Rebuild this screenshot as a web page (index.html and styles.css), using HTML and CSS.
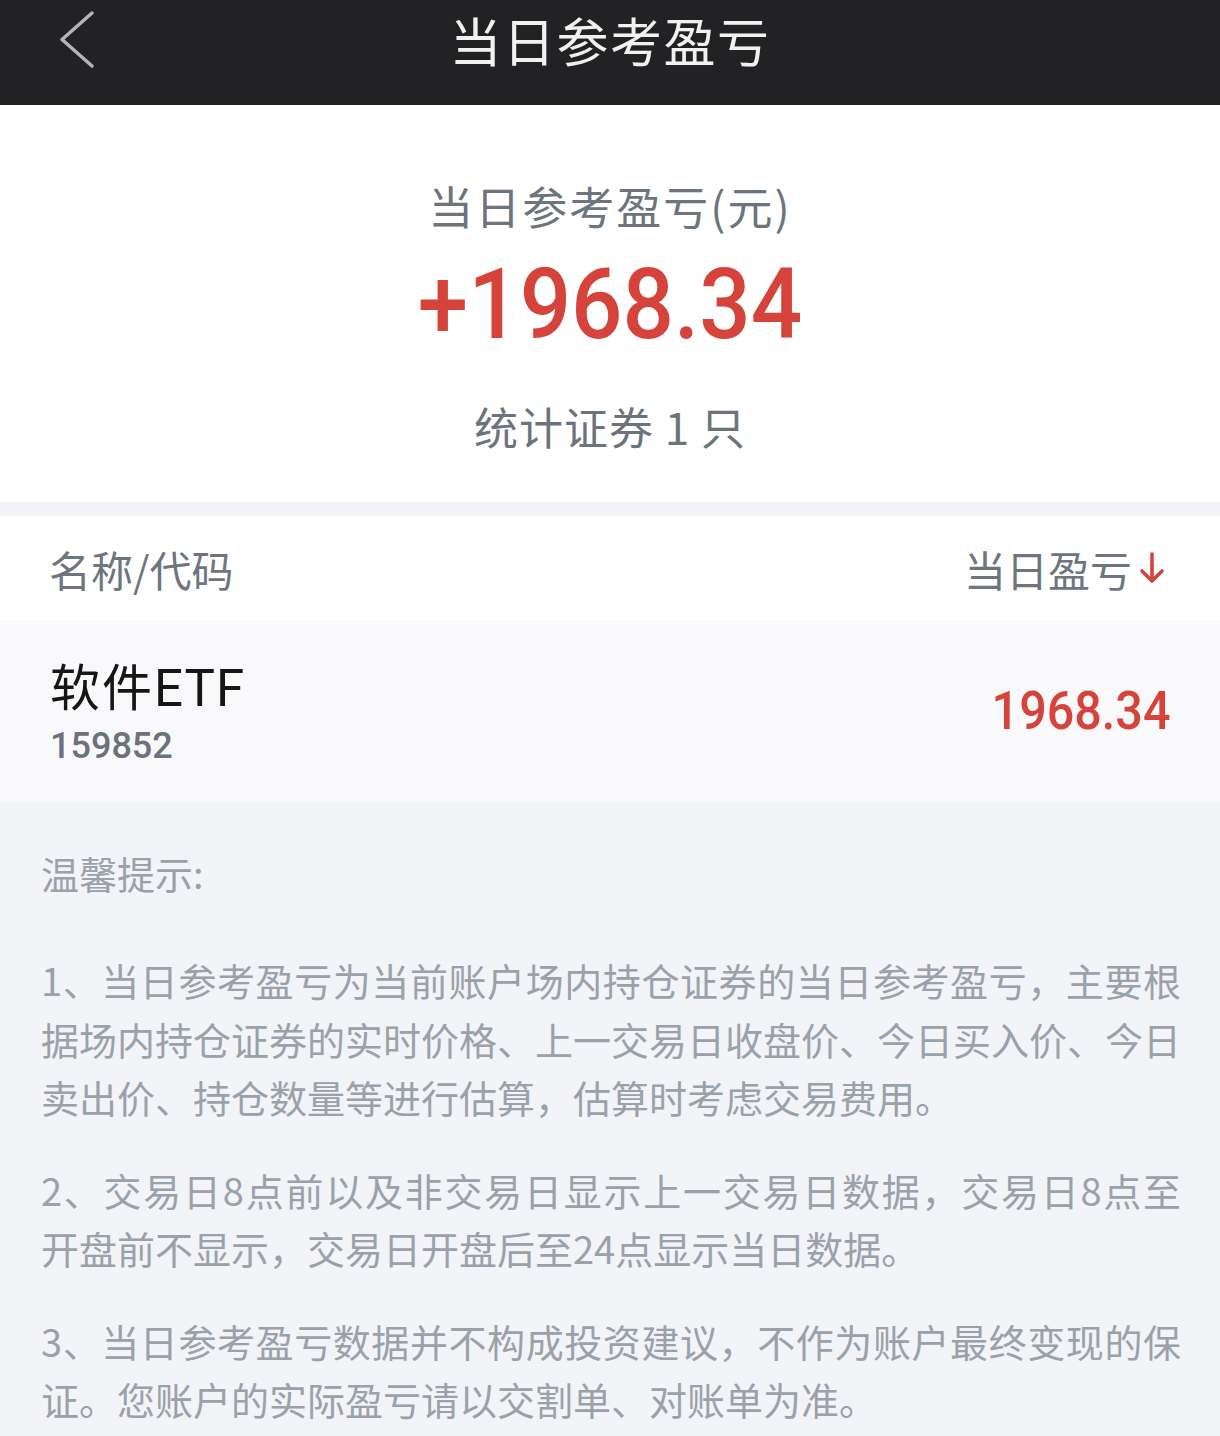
FILE: index.html
```html
<!DOCTYPE html>
<html lang="zh-CN">
<head>
<meta charset="utf-8">
<title>当日参考盈亏</title>
<link rel="stylesheet" href="styles.css">
</head>
<body>
<header class="topbar">
  <div class="back">
    <svg width="40" height="60" viewBox="0 0 40 60" aria-hidden="true">
      <path d="M33 3 L3 29.5 L33 56" fill="none" stroke="#b4b4b6" stroke-width="3.5" stroke-linecap="round" stroke-linejoin="round"/>
    </svg>
  </div>
  <h1 class="title">当日参考盈亏</h1>
  <div class="spacer"></div>
</header>

<section class="summary">
  <div class="sum-label">当日参考盈亏(元)</div>
  <div class="sum-value"><span class="num">+1968.34</span></div>
  <div class="sum-count">统计证券 1 只</div>
</section>

<section class="list">
  <div class="list-head">
    <span class="col-name">名称/代码</span>
    <span class="col-pl">当日盈亏<svg class="arrow" width="26" height="34" viewBox="0 0 26 34" aria-hidden="true">
        <path d="M13 3 V30 M3 20 L13 30 L23 20" fill="none" stroke="#d5433b" stroke-width="3.6" stroke-linecap="round" stroke-linejoin="round"/>
      </svg></span>
  </div>
  <div class="row">
    <div class="stock">
      <div class="stock-name">软件<span class="latin">ETF</span></div>
      <div class="stock-code">159852</div>
    </div>
    <div class="stock-pl"><span class="num">1968.34</span></div>
  </div>
</section>

<section class="notes">
  <div class="notes-title">温馨提示:</div>
  <p class="note">
    <span class="ln">1、当日参考盈亏为当前账户场内持仓证券的当日参考盈亏，主要根</span>
    <span class="ln">据场内持仓证券的实时价格、上一交易日收盘价、今日买入价、今日</span>
    <span class="ln end">卖出价、持仓数量等进行估算，估算时考虑交易费用。</span>
  </p>
  <p class="note">
    <span class="ln">2、交易日8点前以及非交易日显示上一交易日数据，交易日8点至</span>
    <span class="ln end">开盘前不显示，交易日开盘后至24点显示当日数据。</span>
  </p>
  <p class="note">
    <span class="ln">3、当日参考盈亏数据并不构成投资建议，不作为账户最终变现的保</span>
    <span class="ln end">证。您账户的实际盈亏请以交割单、对账单为准。</span>
  </p>
</section>
</body>
</html>
```
FILE: styles.css
```css
* { box-sizing: border-box; }

html, body {
  margin: 0;
  padding: 0;
}

body {
  width: 1220px;
  min-height: 1436px;
  background: #f3f4f8;
  font-family: "Noto Sans CJK SC", "Noto Sans", sans-serif;
  color: #1a1a1a;
}

/* top bar */
.topbar {
  height: 105px;
  padding-bottom: 25px;
  background: #222224;
  display: grid;
  grid-template-columns: 1fr auto 1fr;
  align-items: center;
}

.back {
  padding-left: 59px;
  display: flex;
  align-items: center;
}

.back svg { display: block; }

.title {
  margin: 0;
  font-size: 52px;
  line-height: 78px;
  font-weight: 400;
  color: #f1f1f1;
  letter-spacing: 1.5px;
}

/* summary */
.summary {
  background: #ffffff;
  height: 397px;
  padding-top: 71px;
  display: flex;
  flex-direction: column;
  align-items: center;
}

.sum-label {
  font-size: 45px;
  line-height: 60px;
  letter-spacing: 2px;
  color: #6d747d;
}

.sum-value {
  margin-top: 14px;
  height: 108px;
  line-height: 108px;
  font-family: "Roboto", "Liberation Sans", sans-serif;
  font-weight: 500;
  font-size: 99px;
  color: #d5433b;
}

.num {
  display: inline-block;
  transform: scaleX(0.915);
}

.sum-count {
  margin-top: 38px;
  font-size: 44px;
  line-height: 60px;
  letter-spacing: 1px;
  color: #6d737c;
}

/* list */
.list {
  margin-top: 14px;
}

.list-head {
  height: 104px;
  background: #ffffff;
  padding: 0 55px 0 51px;
  display: flex;
  justify-content: space-between;
  align-items: center;
  font-size: 42px;
  color: #6e757e;
}

.col-name { margin-left: -2px; }

.col-pl {
  display: flex;
  align-items: center;
  gap: 7px;
}

.arrow { display: block; }

.row {
  height: 182px;
  background: #f9f9fb;
  padding: 0 50px 0 50px;
  display: flex;
  justify-content: space-between;
  align-items: center;
}

.stock {
  padding-top: 6px;
}

.stock-name {
  font-size: 50px;
  line-height: 58px;
  letter-spacing: 2px;
  color: #161616;
}

.stock-name .latin {
  font-family: "Roboto", "Noto Sans CJK SC", sans-serif;
  font-size: 51px;
  letter-spacing: 1px;
}

.stock-code {
  font-family: "Roboto", "Liberation Sans", sans-serif;
  font-weight: 500;
  font-size: 36px;
  line-height: 56px;
  color: #6b727b;
}

.stock-pl {
  font-family: "Roboto", "Liberation Sans", sans-serif;
  font-weight: 500;
  font-size: 53px;
  line-height: 64px;
  color: #d5433b;
}

.stock-pl .num { transform-origin: right center; }

/* notes */
.notes {
  padding: 42px 39px 10px 41px;
  color: #9ba1a9;
  font-size: 38px;
}

.notes-title {
  line-height: 58px;
  margin-bottom: 49px;
}

.note {
  margin: 0 0 34px;
  line-height: 58.5px;
}

.ln {
  display: block;
  white-space: nowrap;
  text-align: justify;
  text-align-last: justify;
}

.ln.end {
  text-align-last: left;
}
```
